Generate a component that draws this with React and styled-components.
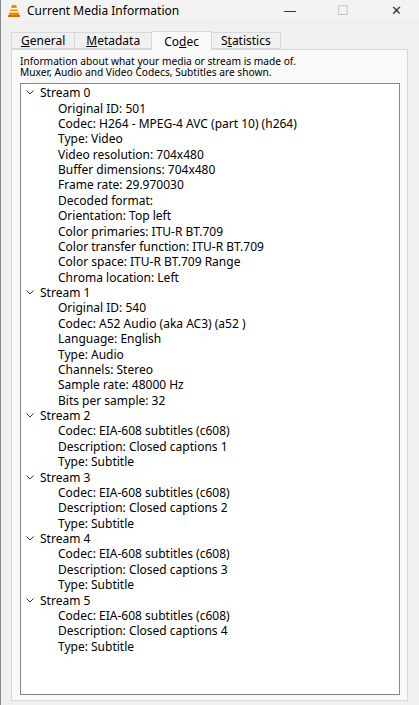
import React from 'react';
import styled, { createGlobalStyle } from 'styled-components';

const Global = createGlobalStyle`
  html, body { margin: 0; padding: 0; background: #f0f0f0; }
  body { font-family: "Segoe UI", "Noto Sans", "Liberation Sans", sans-serif; font-size: 12px; color: #000; }
`;

const Window = styled.div`
  width: 419px; height: 705px; display: flex; flex-direction: column;
  background: #f0f0f0; box-sizing: border-box; border-left: 1px solid #888;
`;

const TitleBar = styled.div`
  height: 20px; display: flex; align-items: center; padding-left: 7px; gap: 7px;
  background: #f3f3f3; font-size: 12px;
`;

const Title = styled.div` flex: 1; `;

const Ctrl = styled.div`
  width: 46px; display: flex; justify-content: center; font-size: 13px;
  color: ${p => (p.dim ? '#bbb' : '#333')};
`;

const Body = styled.div` flex: 1; display: flex; flex-direction: column; padding: 11px 11px 4px 10px; `;

const Tabs = styled.div` display: flex; padding-left: 1px; height: 18px; align-items: flex-end; `;

const Tab = styled.div`
  height: ${p => (p.active ? '19px' : '17px')};
  margin-bottom: ${p => (p.active ? '-1px' : '0')};
  padding: 0 ${p => p.pad}px; display: flex; align-items: center;
  background: ${p => (p.active ? '#f9f9f9' : '#f0f0f0')};
  border: 1px solid #d9d9d9; border-bottom: ${p => (p.active ? 'none' : '1px solid #d9d9d9')};
  margin-left: -1px; z-index: ${p => (p.active ? 1 : 0)}; box-sizing: border-box;
`;

const Panel = styled.div`
  flex: 1; background: #f9f9f9; border: 1px solid #d9d9d9; display: flex; flex-direction: column;
  padding: 6px 7px 5px 8px;
`;

const Intro = styled.div` font-size: 10.2px; line-height: 11px; margin-bottom: 5px; `;

const Tree = styled.div` flex: 1; background: #fff; border: 1px solid #828790; padding-top: 1px; `;

const Row = styled.div`
  height: 15.38px; display: flex; align-items: center; white-space: nowrap;
  padding-left: ${p => (p.child ? 37 : 5)}px;
`;

const Chevron = styled.span` width: 14px; display: flex; align-items: center; `;

const streams = [
  ['Original ID: 501', 'Codec: H264 - MPEG-4 AVC (part 10) (h264)', 'Type: Video', 'Video resolution: 704x480', 'Buffer dimensions: 704x480', 'Frame rate: 29.970030', 'Decoded format:', 'Orientation: Top left', 'Color primaries: ITU-R BT.709', 'Color transfer function: ITU-R BT.709', 'Color space: ITU-R BT.709 Range', 'Chroma location: Left'],
  ['Original ID: 540', 'Codec: A52 Audio (aka AC3) (a52 )', 'Language: English', 'Type: Audio', 'Channels: Stereo', 'Sample rate: 48000 Hz', 'Bits per sample: 32'],
  ...[1, 2, 3, 4].map(n => ['Codec: EIA-608 subtitles (c608)', `Description: Closed captions ${n}`, 'Type: Subtitle']),
];

const Cone = () => (
  <svg width="12" height="13" viewBox="0 0 12 13">
    <path d="M4 1h4l3.2 10H.8z" fill="#f08a00" />
    <path d="M3.2 4h5.6l.5 1.6H2.7zM2.3 7h7.4l.5 1.6H1.8z" fill="#fff" />
    <rect x="0" y="11" width="12" height="2" rx="0.5" fill="#e06a00" />
  </svg>
);

export default function App() {
  return (
    <Window>
      <Global />
      <TitleBar>
        <Cone />
        <Title>Current Media Information</Title>
        <Ctrl>—</Ctrl>
        <Ctrl dim>☐</Ctrl>
        <Ctrl>✕</Ctrl>
      </TitleBar>
      <Body>
        <Tabs>
          <Tab pad={9}><u>G</u>eneral</Tab>
          <Tab pad={11}><u>M</u>etadata</Tab>
          <Tab active pad={12}>Co<u>d</u>ec</Tab>
          <Tab pad={9}>S<u>t</u>atistics</Tab>
        </Tabs>
        <Panel>
          <Intro>Information about what your media or stream is made of.<br />Muxer, Audio and Video Codecs, Subtitles are shown.</Intro>
          <Tree>
            {streams.map((items, i) => (
              <React.Fragment key={i}>
                <Row>
                  <Chevron>
                    <svg width="8" height="5" viewBox="0 0 8 5"><path d="M.5.5 4 4 7.5.5" fill="none" stroke="#333" strokeWidth="1" /></svg>
                  </Chevron>
                  Stream {i}
                </Row>
                {items.map(t => <Row child key={t}>{t}</Row>)}
              </React.Fragment>
            ))}
          </Tree>
        </Panel>
      </Body>
    </Window>
  );
}
